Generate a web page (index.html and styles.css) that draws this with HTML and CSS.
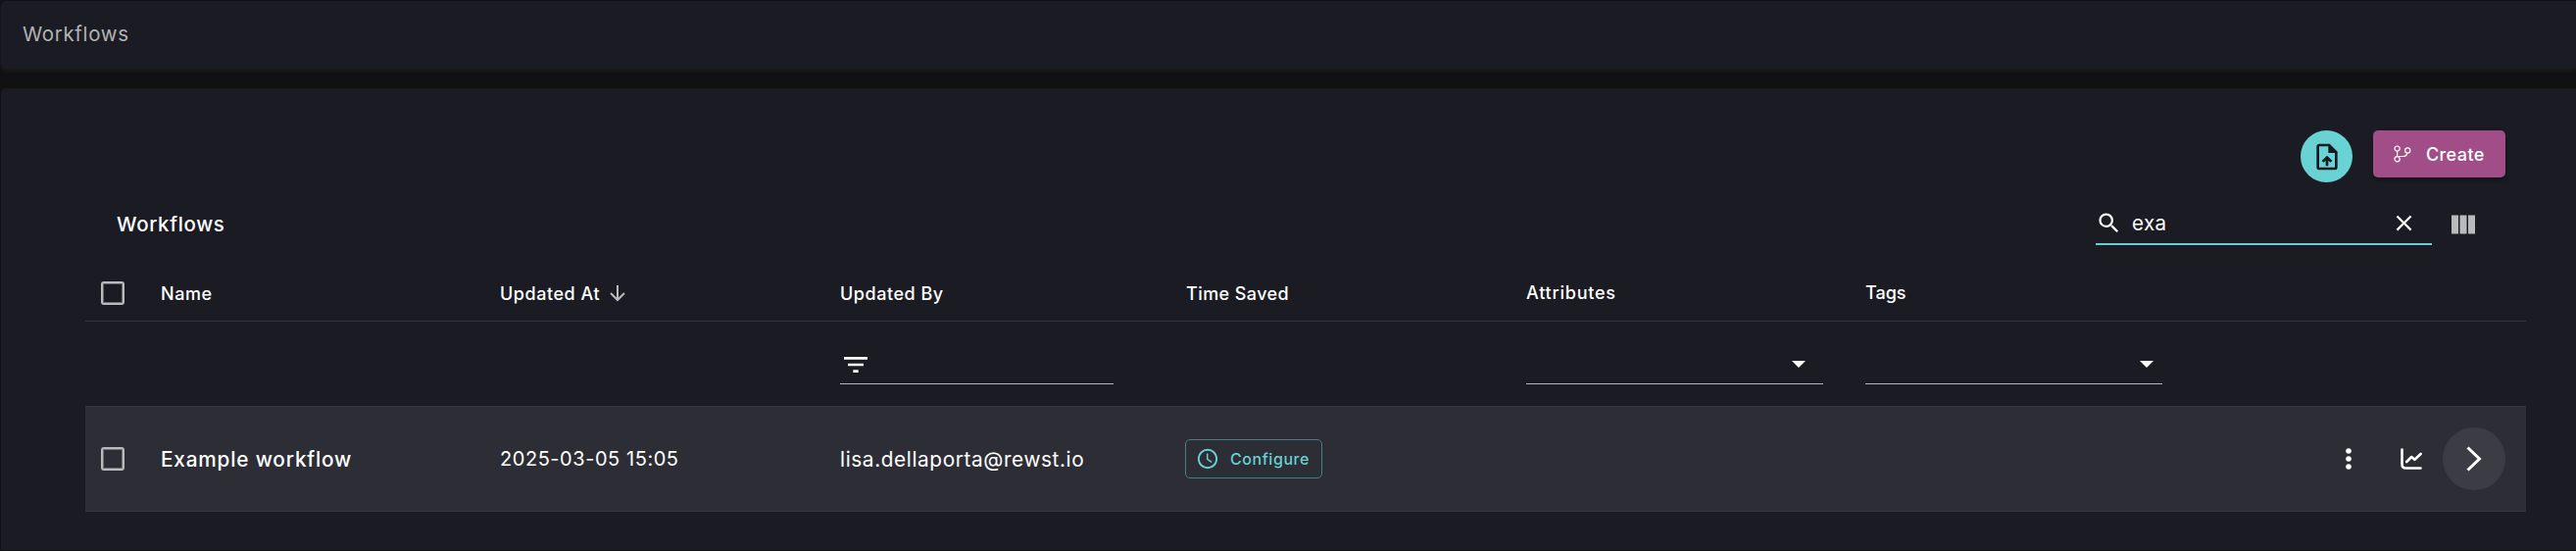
FILE: index.html
```html
<!DOCTYPE html>
<html lang="en">
<head>
<meta charset="utf-8">
<title>Workflows</title>
<link rel="stylesheet" href="styles.css">
</head>
<body>
<header class="topbar"><span class="crumb">Workflows</span></header>
<main class="panel">
  <div class="actions">
    <button class="import" aria-label="Import">
      <svg width="32" height="32" viewBox="0 0 24 24" fill="#151a20"><path d="M14 2H6c-1.100 0-2 .9-2 2v16c0 1.100.9 2 2 2h12c1.100 0 2-.9 2-2V8l-6-6zm4 18H6V4h7v5h5v11zM8 15l1.400 1.400 1.600-1.600V19h2v-4.200l1.600 1.600L16 15l-4-4z"/></svg>
    </button>
    <button class="create">
      <svg width="18" height="18" viewBox="0 0 18 18" fill="none" stroke="#fff" stroke-width="1.200"><circle cx="3.600" cy="3.600" r="2.600"/><circle cx="3.600" cy="14.200" r="2.600"/><circle cx="14.200" cy="5.400" r="2.600"/><path d="M3.600 6.200v5.400M13.900 8C13.300 10.800 12.500 11.500 10 11.500H5"/></svg>
      <span class="t create-label">Create</span>
    </button>
  </div>
  <div class="toolbar">
    <h1 class="t title">Workflows</h1>
    <div class="search">
      <svg width="27" height="27" viewBox="0 0 24 24" fill="#fff"><path d="M15.500 14h-.79l-.28-.27A6.470 6.470 0 0 0 16 9.500 6.500 6.500 0 1 0 9.500 16c1.610 0 3.090-.59 4.230-1.570l.27.280v.79l5 4.990L20.490 19l-4.990-5zm-6 0C7.010 14 5 11.990 5 9.500S7.010 5 9.500 5 14 7.010 14 9.500 11.990 14 9.500 14z"/></svg>
      <span class="t query">exa</span>
      <svg class="clear" width="27" height="27" viewBox="0 0 24 24" fill="#fff"><path d="M19 6.410 17.590 5 12 10.590 6.410 5 5 6.410 10.590 12 5 17.590 6.410 19 12 13.410 17.590 19 19 17.590 13.410 12z"/></svg>
    </div>
    <svg class="columns" width="24" height="20" viewBox="0 0 24 20" fill="#bababd"><path d="M0 .5h7v19H0zM8.500 .5h7v19h-7zM17 .5h7v19h-7z"/></svg>
  </div>
  <section class="table">
    <div class="row head">
      <span class="check"></span>
      <span class="t name-h">Name</span>
      <span class="cell"><span class="t">Updated At</span>
        <svg width="16" height="17" viewBox="0 0 16 17" fill="none" stroke="#bababd" stroke-width="2"><path d="M8 0v15M1 8l7 7 7-7"/></svg></span>
      <span class="t by-h">Updated By</span>
      <span class="t time-h">Time Saved</span>
      <span class="t attr-h">Attributes</span>
      <span class="t tags-h">Tags</span>
    </div>
    <div class="row filters">
      <div class="field by-f"><svg width="32" height="32" viewBox="0 0 24 24" fill="#fff"><path d="M10 18h4v-2h-4v2zM3 6v2h18V6H3zm3 7h12v-2H6v2z"/></svg></div>
      <div class="field attr-f"><svg width="14" height="7" viewBox="0 0 14 7" fill="#fff"><path d="M0 0h14L7 7z"/></svg></div>
      <div class="field tags-f"><svg width="14" height="7" viewBox="0 0 14 7" fill="#fff"><path d="M0 0h14L7 7z"/></svg></div>
    </div>
    <div class="row item">
      <span class="check"></span>
      <span class="t name-v">Example workflow</span>
      <span class="t at-v">2025-03-05 15:05</span>
      <span class="t by-v">lisa.dellaporta@rewst.io</span>
      <button class="configure">
        <svg width="20" height="22" viewBox="0 0 20 22" fill="none" stroke="#67d1d2"><circle cx="10" cy="11" r="9.200" stroke-width="1.900"/><path d="M9.700 5.500v5.900l4.500 3" stroke-width="1.500"/></svg>
        <span class="t conf-label">Configure</span>
      </button>
      <div class="tools">
        <svg width="6" height="22" viewBox="0 0 6 22" fill="#fff"><circle cx="3" cy="3" r="2.800"/><circle cx="3" cy="11" r="2.800"/><circle cx="3" cy="19" r="2.800"/></svg>
        <svg width="22" height="22" viewBox="0 0 22 22" fill="none" stroke="#fff" stroke-width="2.600" stroke-linecap="round" stroke-linejoin="round"><path d="M1.500 1.500v15q0 4 4 4h15M6.200 14l5-5 3.200 2.800 6.200-5.800"/></svg>
        <button class="open" aria-label="Open"><svg width="16" height="26" viewBox="0 0 16 26" fill="none" stroke="#fff" stroke-width="3"><path d="M1.500 1.500 13.500 13 1.500 24.500"/></svg></button>
      </div>
    </div>
  </section>
</main>
</body>
</html>
```
FILE: styles.css
```css
* { box-sizing: border-box; }
body { margin: 0; padding: 1px 0 0 1px; height: 562px; overflow: hidden; background: #111; color: #fff; font-family: Inter, "Liberation Sans", sans-serif; }
button { border: 0; padding: 0; font: inherit; color: inherit; display: flex; align-items: center; }
svg { display: block; flex: none; }
.t, .crumb { white-space: nowrap; display: block; }
.topbar { height: 69px; padding: 0 22px; display: flex; align-items: center; background: #1b1b24; border-radius: 5px 0 0 5px; box-shadow: 0 2px 4px #1b1d1b; }
.crumb { color: #b2b2b3; font-size: 20.500px; line-height: 30px; letter-spacing: .65px; margin-top: -1px; }
.panel { margin-top: 20px; height: 471px; background: #1b1b24; border-radius: 5px 0 0 0; padding: 43px 51px 0 86px; }
.actions { height: 53px; padding-right: 21px; display: flex; justify-content: flex-end; align-items: flex-start; gap: 21px; }
.import { width: 53px; height: 53px; border-radius: 50%; background: #69d2d4; justify-content: center; }
.create { width: 135px; height: 48px; border-radius: 5px; background: #a14d87; padding-left: 21px; gap: 15px; box-shadow: 0 2px 4px #0006; }
.create-label { font-size: 18px; font-weight: 500; letter-spacing: .4px; }
.toolbar { height: 64px; display: flex; padding: 0 52px 0 32px; }
.title { margin: 28px auto 0 0; font-size: 20.500px; line-height: 30px; font-weight: 500; letter-spacing: .65px; }
.search { width: 343px; height: 64px; border-bottom: 2px solid #67d1d2; display: flex; align-items: center; padding: 21px 15px 0 0; }
.query { margin: 0 auto 0 10px; font-size: 20.500px; letter-spacing: .4px; }
.columns { margin: 33px 0 0 20px; }
.row { display: flex; align-items: center; }
.head { height: 78px; border-bottom: 1px solid #34343b; padding: 21px 0 0 16px; font-size: 18px; font-weight: 500; letter-spacing: .53px; }
.head .t { padding-top: 1px; }
.check { flex: none; width: 24px; height: 24px; border: 2px solid #bababb; border-radius: 3px; margin-right: 37px; box-shadow: inset 0 0 0 1px #bababb80; }
.cell { display: flex; align-items: center; width: 347px; gap: 10px; }
.name-h, .name-v { width: 346px; }
.at-v { width: 347px; }
.by-h, .by-v { width: 353px; }
.time-h { width: 347px; letter-spacing: .42px; }
.attr-h { width: 346px; letter-spacing: .78px; }
.head .attr-h, .head .tags-h { padding: 0 0 1px; }
.tags-h { letter-spacing: 0; }
.filters { height: 86px; padding: 22px 0 0 770px; align-items: flex-start; }
.field { height: 42px; padding-top: 2px; border-bottom: 1px solid #b5b5b8; display: flex; align-items: center; justify-content: flex-end; }
.by-f { width: 279px; justify-content: flex-start; margin-right: 421px; }
.attr-f { width: 303px; margin-right: 43px; padding-right: 18px; }
.tags-f { width: 303px; padding-right: 9px; }
.item { height: 108px; background: #2d2d35; border: solid #35353a; border-width: 1px 0; padding: 0 21px 0 16px; }
.name-v { font-size: 20.800px; font-weight: 500; letter-spacing: .8px; }
.at-v { font-size: 20px; letter-spacing: .55px; }
.by-v { font-size: 20.800px; letter-spacing: .6px; }
.configure { width: 140px; height: 40px; border: 1px solid #477f84; border-radius: 5px; background: none; color: #67d1d2; margin-left: -1px; padding-left: 12px; gap: 13px; }
.conf-label { font-size: 16px; font-weight: 500; letter-spacing: .55px; }
.tools { margin-left: auto; display: flex; align-items: center; }
.tools svg:nth-child(2) { margin: 0 21px 0 50px; }
.open { width: 64px; height: 64px; border-radius: 50%; background: #3c3c44; padding-left: 24px; }
```
